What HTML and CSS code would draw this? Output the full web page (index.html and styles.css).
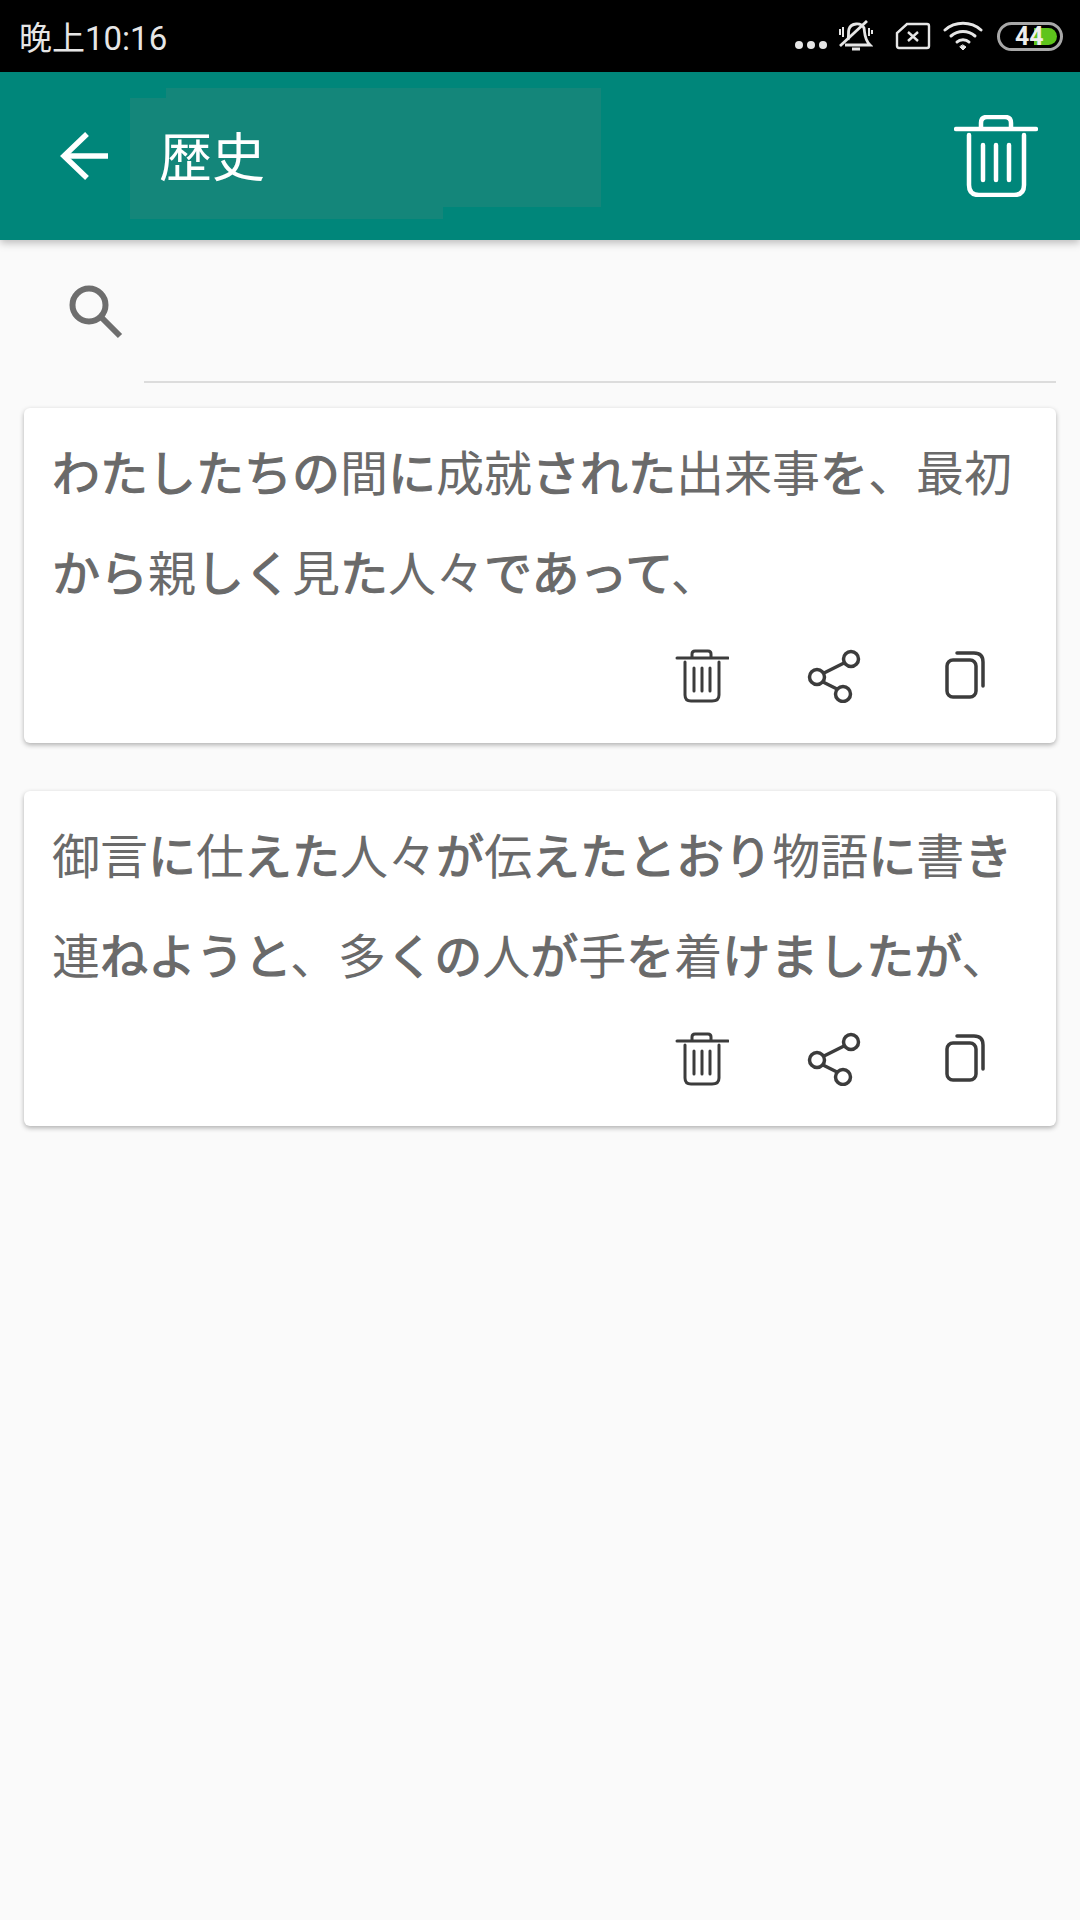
FILE: index.html
```html
<!DOCTYPE html>
<html lang="ja">
<head>
    <meta charset="UTF-8">
    <meta name="viewport" content="width=device-width, initial-scale=1.0">
    <title>歴史</title>
    <link rel="stylesheet" href="styles.css">
</head>
<body>
    <!-- Status Bar -->
    <div class="status-bar">
        <span class="status-time">晚上10:16</span>
        <div class="status-icons">
            <svg class="status-dots" width="34" height="12" viewBox="0 0 34 12"><circle cx="5" cy="6" r="4"/><circle cx="17" cy="6" r="4"/><circle cx="29" cy="6" r="4"/></svg>
            <svg class="status-bell" width="34" height="32" viewBox="0 0 34 32" fill="none" stroke="#e6e6e6" stroke-width="2.8">
                <path d="M9 20 C10 16 9 12 10 9 C12 3 22 2 25 8 C26 13 25 19 31 25 H6"/>
                <path d="M1 26 L28 1"/>
                <path d="M13 29 H21" stroke-width="3"/>
                <path d="M1 9 V15 M4 7 V17 M30 8 V16 M33 10 V14" stroke-width="2"/>
            </svg>
            <svg class="status-sim" width="36" height="28" viewBox="0 0 36 28" fill="none" stroke="#e6e6e6" stroke-width="2.4">
                <path d="M12 2 H32 Q34 2 34 4 V24 Q34 26 32 26 H4 Q2 26 2 24 V11 Z"/>
                <path d="M13 10 L23 19 M23 10 L13 19"/>
            </svg>
            <svg class="status-wifi" width="40" height="30" viewBox="0 0 40 30" fill="none" stroke="#e6e6e6" stroke-width="3" stroke-linecap="round">
                <path d="M2 9 C12 0 28 0 38 9"/>
                <path d="M8 15 C15 9 25 9 32 15"/>
                <path d="M14 21 C17 18 23 18 26 21"/>
                <path d="M17 26 L20 29 L23 26 L20 24 Z" fill="#e6e6e6" stroke-width="1"/>
            </svg>
            <div class="battery">
                <div class="battery-fill"></div>
                <span class="battery-level">44</span>
            </div>
        </div>
    </div>

    <!-- Toolbar -->
    <div class="toolbar">
        <div class="smudge smudge-top"></div>
        <div class="smudge smudge-bottom"></div>
        <div class="toolbar-left">
            <svg class="back-icon" width="48" height="48" viewBox="0 0 48 48" fill="none" stroke="#fff" stroke-width="5.5">
                <path d="M49 24 H4"/>
                <path d="M27 2 L4 24 L27 46"/>
            </svg>
            <h1 class="toolbar-title">歴史</h1>
        </div>
        <svg class="clear-icon" width="84" height="82" viewBox="0 0 84 82" fill="none" stroke="#fff" stroke-width="4.5" stroke-linecap="round">
            <path d="M2 14 H82"/>
            <path d="M27 13 V8 Q27 2 33 2 H51 Q57 2 57 8 V13"/>
            <path d="M15 20 V70 Q15 80 25 80 H60 Q70 80 70 70 V20"/>
            <path d="M29 30 V65 M42 30 V65 M55 30 V65"/>
        </svg>
    </div>

    <!-- Search -->
    <div class="search-row">
        <svg class="search-icon" width="54" height="54" viewBox="0 0 54 54" fill="none" stroke="#6e6e6e" stroke-width="6">
            <circle cx="20" cy="20" r="16.5"/>
            <path d="M32 32 L51 51"/>
        </svg>
        <div class="search-field"></div>
    </div>

    <!-- History List -->
    <div class="history-list">
        <div class="history-card">
            <p class="history-text"><span class="kana">わたしたちの</span>間<span class="kana">に</span>成就<span class="kana">された</span>出来事<span class="kana">を</span>、最初<span class="kana">から</span>親<span class="kana">しく</span>見<span class="kana">た</span>人々<span class="kana">であって</span>、</p>
            <div class="card-actions">
                <svg class="action-icon" width="54" height="54" viewBox="0 0 54 54" fill="none" stroke="#3c3c3c" stroke-width="3" stroke-linecap="round">
                    <path d="M2 9 H53"/>
                    <path d="M17 8 V5 Q17 2 20 2 H33 Q36 2 36 5 V8"/>
                    <path d="M10 13 V46 Q10 52 16 52 H37 Q44 52 44 46 V13"/>
                    <path d="M19 19 V42 M27 19 V42 M35 19 V42"/>
                </svg>
                <svg class="action-icon" width="54" height="54" viewBox="0 0 54 54" fill="none" stroke="#3c3c3c" stroke-width="3.5">
                    <circle cx="44" cy="10" r="7.5"/>
                    <circle cx="10" cy="28" r="7.5"/>
                    <circle cx="36" cy="45" r="7.5"/>
                    <path d="M37 14 L17 24 M16 33 L30 40"/>
                </svg>
                <svg class="action-icon" width="54" height="54" viewBox="0 0 54 54" fill="none" stroke="#3c3c3c" stroke-width="3.5" stroke-linecap="round">
                    <rect x="8" y="11" width="29" height="37" rx="6"/>
                    <path d="M18 4 H35 Q44 4 44 13 V37"/>
                </svg>
            </div>
        </div>
        <div class="history-card">
            <p class="history-text">御言<span class="kana">に</span>仕<span class="kana">えた</span>人々<span class="kana">が</span>伝<span class="kana">えたとおり</span>物語<span class="kana">に</span>書<span class="kana">き</span>連<span class="kana">ねようと</span>、多<span class="kana">くの</span>人<span class="kana">が</span>手<span class="kana">を</span>着<span class="kana">けましたが</span>、</p>
            <div class="card-actions">
                <svg class="action-icon" width="54" height="54" viewBox="0 0 54 54" fill="none" stroke="#3c3c3c" stroke-width="3" stroke-linecap="round">
                    <path d="M2 9 H53"/>
                    <path d="M17 8 V5 Q17 2 20 2 H33 Q36 2 36 5 V8"/>
                    <path d="M10 13 V46 Q10 52 16 52 H37 Q44 52 44 46 V13"/>
                    <path d="M19 19 V42 M27 19 V42 M35 19 V42"/>
                </svg>
                <svg class="action-icon" width="54" height="54" viewBox="0 0 54 54" fill="none" stroke="#3c3c3c" stroke-width="3.5">
                    <circle cx="44" cy="10" r="7.5"/>
                    <circle cx="10" cy="28" r="7.5"/>
                    <circle cx="36" cy="45" r="7.5"/>
                    <path d="M37 14 L17 24 M16 33 L30 40"/>
                </svg>
                <svg class="action-icon" width="54" height="54" viewBox="0 0 54 54" fill="none" stroke="#3c3c3c" stroke-width="3.5" stroke-linecap="round">
                    <rect x="8" y="11" width="29" height="37" rx="6"/>
                    <path d="M18 4 H35 Q44 4 44 13 V37"/>
                </svg>
            </div>
        </div>
    </div>
</body>
</html>
```

FILE: styles.css
```css
* {
    margin: 0;
    padding: 0;
    box-sizing: border-box;
}

body {
    width: 1080px;
    height: 1920px;
    overflow: hidden;
    font-family: "Noto Sans CJK JP", "Noto Sans", sans-serif;
    background-color: #fafafa;
}

.status-bar {
    height: 72px;
    display: flex;
    justify-content: space-between;
    align-items: center;
    padding: 0 17px 0 19px;
    background-color: #000;
    color: #e6e6e6;
}

.status-time {
    font-family: Roboto, "Noto Sans CJK SC", sans-serif;
    font-size: 33px;
}

.status-icons {
    display: flex;
    align-items: center;
}

.status-dots {
    fill: #e6e6e6;
    margin-top: 18px;
    margin-right: 11px;
}

.status-bell {
    margin-right: 22px;
}

.status-sim {
    margin-right: 12px;
}

.status-wifi {
    margin-right: 14px;
}

.battery {
    position: relative;
    width: 66px;
    height: 29px;
    border: 3px solid #a8a8a8;
    border-radius: 15px;
}

.battery-fill {
    position: absolute;
    top: 3px;
    right: 3px;
    bottom: 3px;
    width: 23px;
    background-color: #5ec41c;
    border-radius: 0 10px 10px 0;
}

.battery-level {
    position: absolute;
    top: -1px;
    left: 15px;
    font-family: Roboto, sans-serif;
    font-size: 25px;
    font-weight: 700;
    line-height: 25px;
    color: #eee;
}

.toolbar {
    position: relative;
    z-index: 1;
    height: 168px;
    display: flex;
    justify-content: space-between;
    align-items: center;
    padding: 0 42px 0 60px;
    background-color: #00867a;
    box-shadow: 0 3px 8px rgba(0, 0, 0, 0.25);
}

.smudge {
    position: absolute;
    background-color: #14867a;
}

.smudge-top {
    top: 16px;
    left: 166px;
    width: 435px;
    height: 119px;
}

.smudge-bottom {
    top: 26px;
    left: 130px;
    width: 313px;
    height: 121px;
}

.toolbar-left {
    position: relative;
    display: flex;
    align-items: center;
}

.toolbar-title {
    margin-left: 51px;
    margin-bottom: 5px;
    font-size: 53px;
    font-weight: 400;
    color: #fff;
}

.clear-icon {
    position: relative;
    margin-top: -1px;
}

.search-row {
    position: relative;
    height: 168px;
}

.search-icon {
    position: absolute;
    top: 45px;
    left: 69px;
}

.search-field {
    position: absolute;
    top: 141px;
    left: 144px;
    right: 24px;
    border-top: 2px solid #dcdcdc;
}

.history-list {
    display: flex;
    flex-direction: column;
    gap: 48px;
    padding: 0 24px;
}

.history-card {
    height: 335px;
    padding: 12px 28px 0;
    background-color: #fff;
    border-radius: 6px;
    box-shadow: 0 2px 5px rgba(0, 0, 0, 0.3);
}

.history-text {
    font-size: 48px;
    line-height: 100px;
    color: #6a6a6a;
}

.kana {
    -webkit-text-stroke: 1.2px #6a6a6a;
}

.card-actions {
    display: flex;
    justify-content: flex-end;
    gap: 78px;
    padding-right: 35px;
    margin-top: 29px;
}
```
